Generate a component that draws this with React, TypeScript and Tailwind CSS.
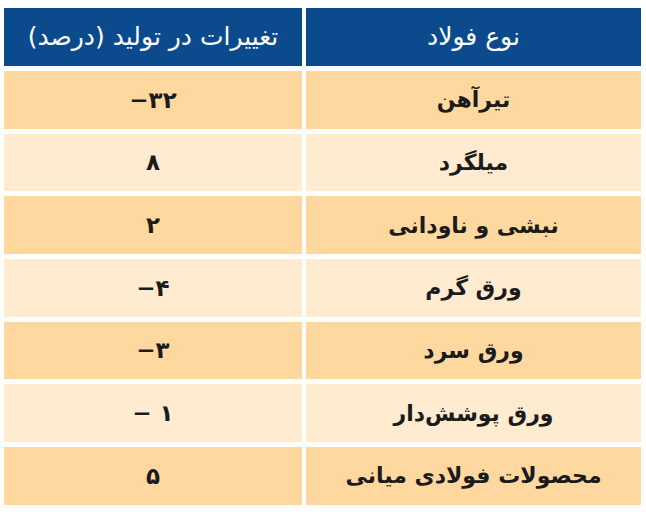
import React from 'react';

interface Row {
  name: string;
  change: string;
}

const rows: Row[] = [
  { name: 'تیرآهن', change: '−۳۲' },
  { name: 'میلگرد', change: '۸' },
  { name: 'نبشی و ناودانی', change: '۲' },
  { name: 'ورق گرم', change: '−۴' },
  { name: 'ورق سرد', change: '−۳' },
  { name: 'ورق پوشش‌دار', change: '− ۱' },
  { name: 'محصولات فولادی میانی', change: '۵' },
];

const App = () => {
  return (
    <div
      dir="rtl"
      className="w-[646px] h-[529px] bg-white pt-[8px] pl-[4px] pr-[5px]"
      style={{ fontFamily: '"DejaVu Sans", "Noto Sans", sans-serif' }}
    >
      <div className="grid grid-cols-[335px_298px] gap-x-[4px] gap-y-[5px]">
        <div className="h-[58px] bg-[#0c4a8e] text-white text-[25px] flex items-center justify-center">
          نوع فولاد
        </div>
        <div className="h-[58px] bg-[#0c4a8e] text-white text-[25px] tracking-[-0.3px] flex items-center justify-center">
          تغییرات در تولید (درصد)
        </div>
        {rows.map((row, i) => {
          const bg = i % 2 === 0 ? 'bg-[#fed89f]' : 'bg-[#feebd0]';
          return (
            <React.Fragment key={row.name}>
              <div className={`h-[57.7px] ${bg} text-[#1b1b1b] text-[22px] font-bold flex items-center justify-center`}>
                {row.name}
              </div>
              <div className={`h-[57.7px] ${bg} text-[#1b1b1b] text-[23px] font-bold flex items-center justify-center`}>
                <span dir="ltr">{row.change}</span>
              </div>
            </React.Fragment>
          );
        })}
      </div>
    </div>
  );
};

export default App;
